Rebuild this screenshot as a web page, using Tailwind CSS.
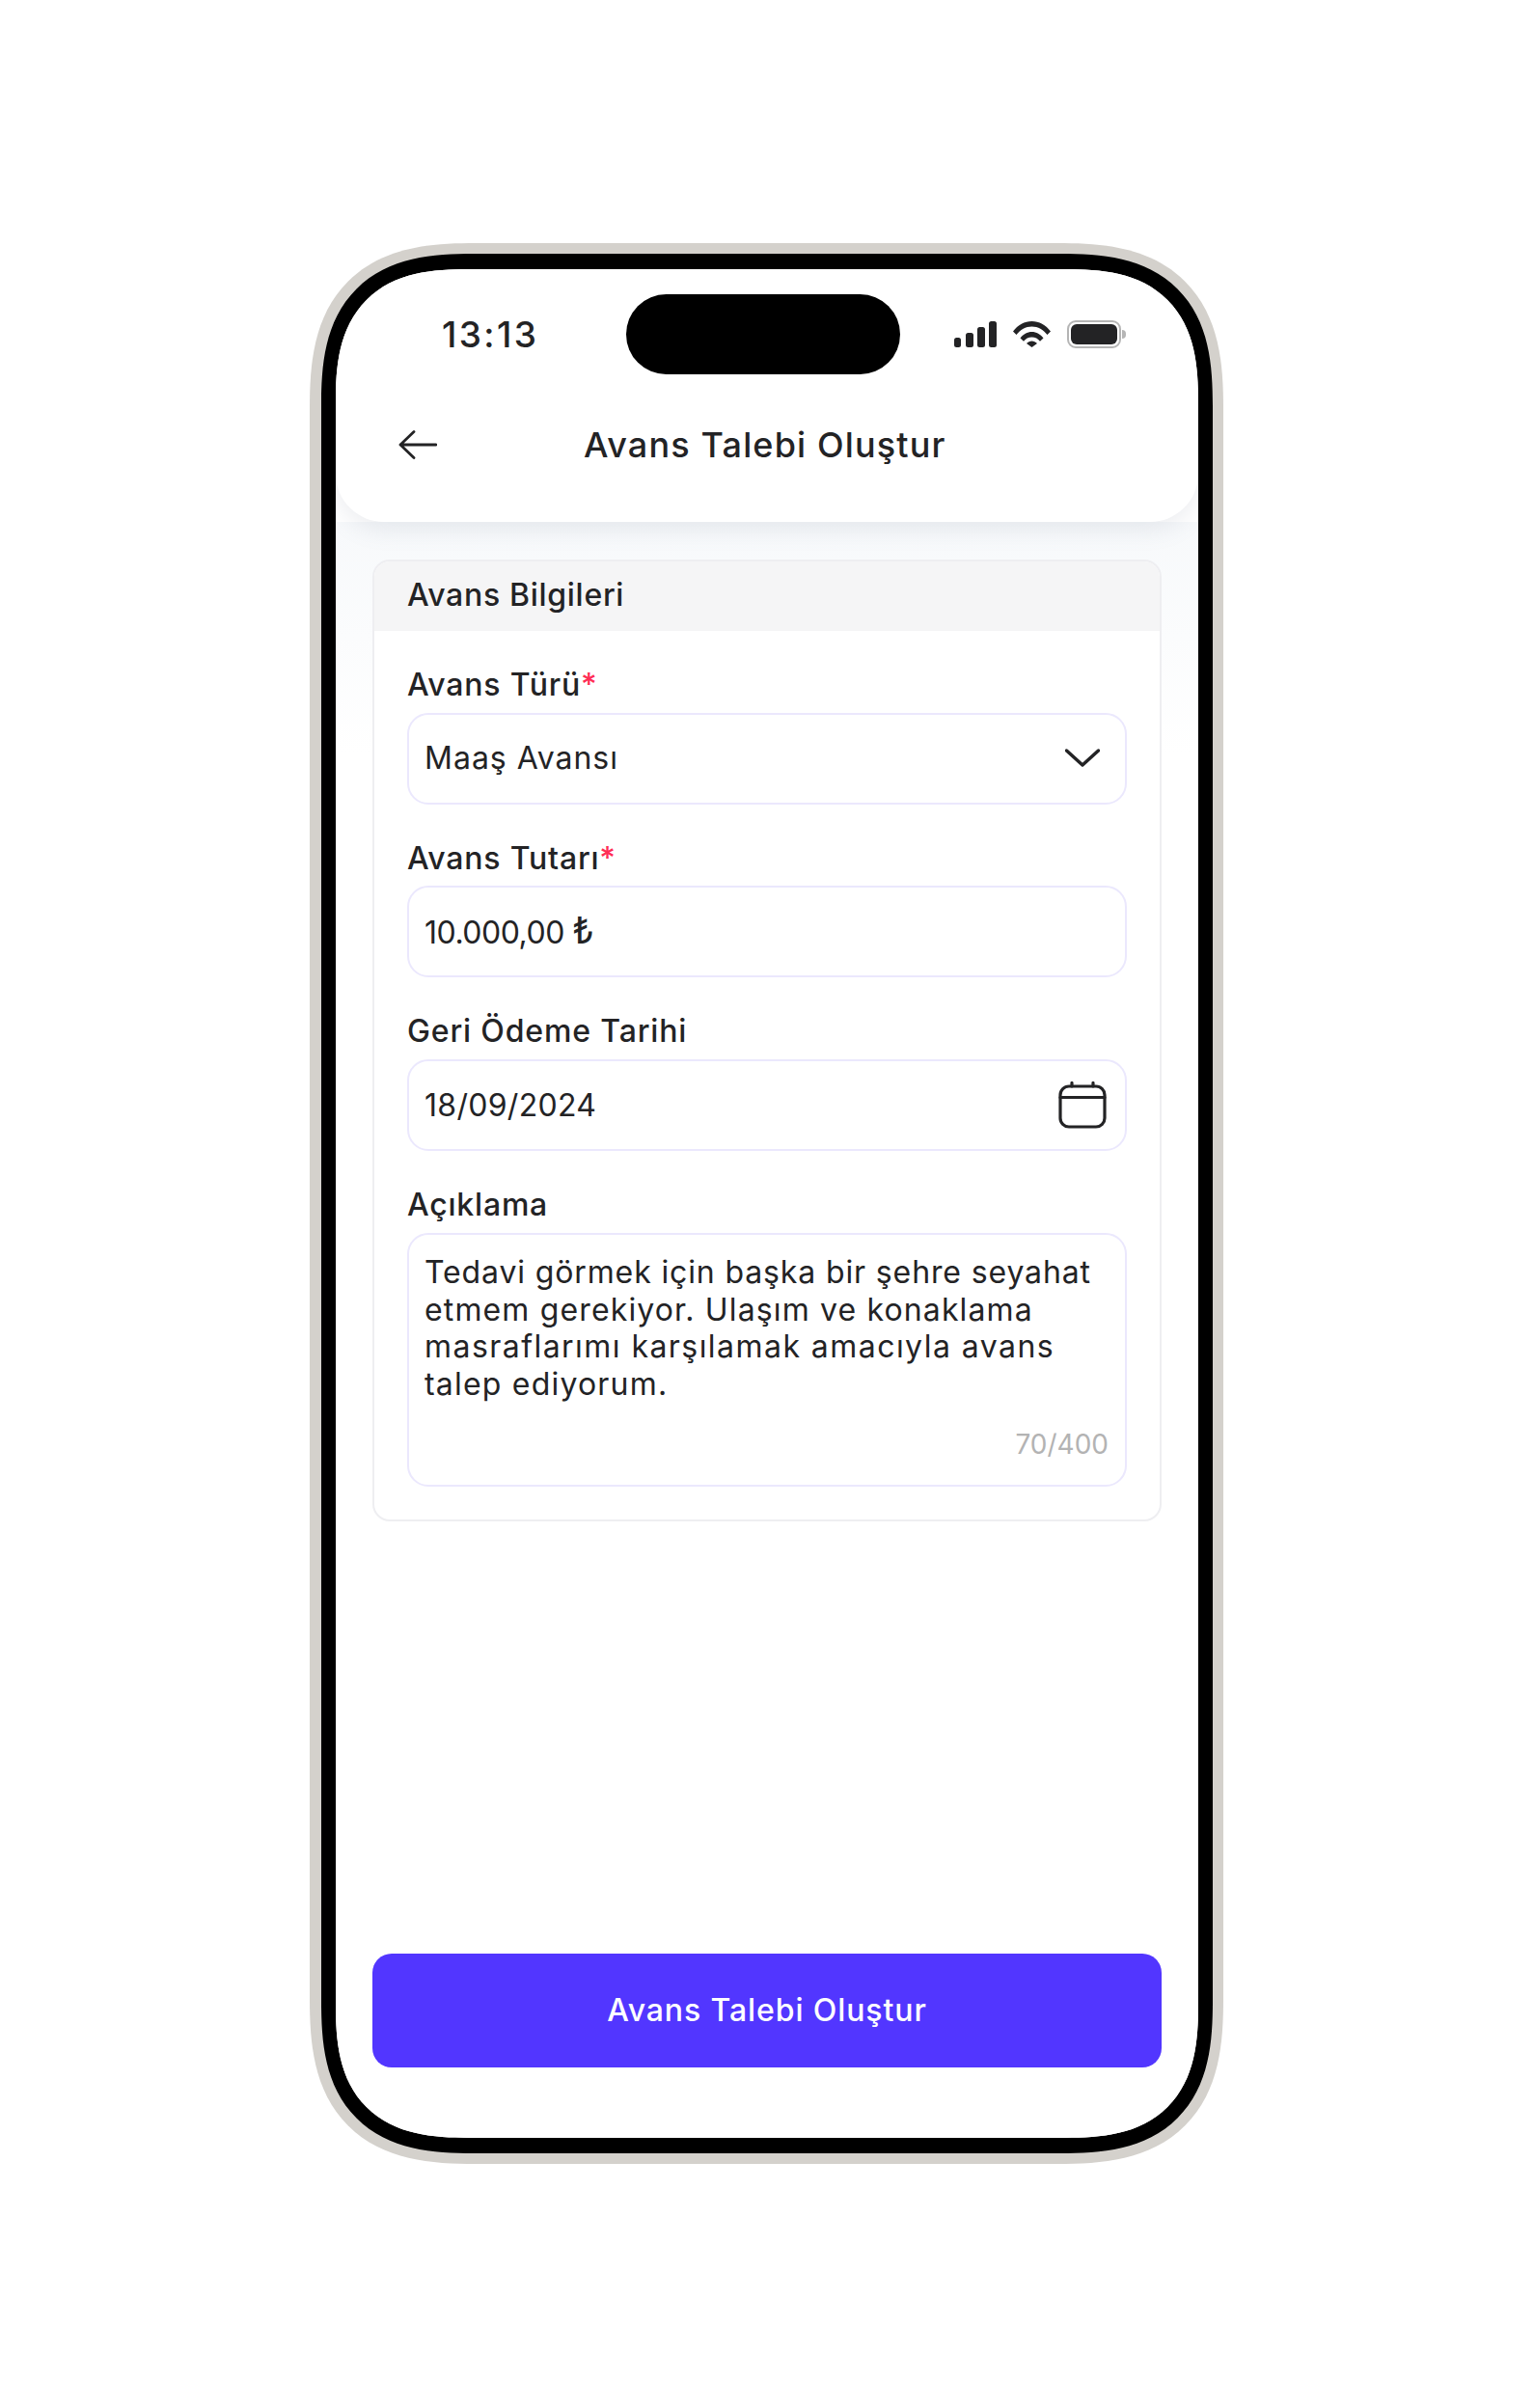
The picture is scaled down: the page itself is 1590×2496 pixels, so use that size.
<!DOCTYPE html>
<html lang="tr"><head><meta charset="utf-8"><title>Avans Talebi Oluştur</title>
<script src="https://cdn.jsdelivr.net/npm/@tailwindcss/browser@4"></script></head>
<body class="bg-white">
<div class="w-[1590px] h-[2496px] pt-[252px] pl-[321px] font-['Inter','Open_Sans',sans-serif] text-[#232325]">
  <div class="w-[947px] h-[1991px] bg-[#d4d1cc] rounded-[172px] [corner-shape:superellipse(1.4)] pl-[12px] pr-[11px] pt-[11px] pb-[11px]">
    <div class="w-[924px] h-[1969px] bg-black rounded-[158px] [corner-shape:superellipse(1.4)] px-[15px] py-[16px]">
      <div class="w-[894px] h-[1937px] bg-white rounded-[138px] [corner-shape:superellipse(1.4)] overflow-hidden flex flex-col">
        <header class="h-[262px] shrink-0 bg-white rounded-b-[50px] shadow-[0_8px_24px_rgba(120,130,150,0.14)] relative z-10">
          <div class="flex pt-[26px] h-[109px]">
            <div class="w-[301px] pl-[110px] h-[83px] flex items-center text-[37px] font-medium tracking-[2.400px]">13:13</div>
            <div class="w-[284px] h-[83px] bg-black rounded-full"></div>
            <div class="flex-1 h-[83px] flex items-center pl-[56px] gap-[17px]">
              <svg class="w-[44px] h-[27px]" viewBox="0 0 44 27" fill="#232325"><rect x="0" y="17" width="7" height="10" rx="2.5"/><rect x="12" y="12" width="8" height="15" rx="2.5"/><rect x="24" y="6" width="8" height="21" rx="2.5"/><rect x="36" y="0" width="8" height="27" rx="2.5"/></svg>
              <svg class="w-[39px] h-[27px]" viewBox="0 0 39 27" fill="#232325"><path d="M0 10.5C5 4 12 0 19.500 0S34 4 39 10.500L35.500 14C31.500 8.800 26 5.500 19.500 5.500S7.500 8.800 3.500 14Z"/><path d="M7.500 17.500C10.500 13.500 14.800 11 19.500 11S28.500 13.500 31.500 17.500L28 20.800C25.800 18 23 16.500 19.500 16.500S13.200 18 11 20.800Z"/><path d="M14 23C15.500 21.500 17.500 20.600 19.500 20.600S23.500 21.500 25 23L19.500 27Z"/></svg>
              <div class="flex items-center">
                <div class="w-[56px] h-[29px] rounded-[9px] border-2 border-[#b5b5b5] p-[2px]"><div class="w-full h-full bg-[#232325] rounded-[6px]"></div></div>
                <div class="w-[4px] h-[9px] bg-[#b5b5b5] rounded-r-full ml-[1px]"></div>
              </div>
            </div>
          </div>
          <div class="flex items-center h-[60px] pl-[65px] mt-[43px]">
            <svg class="w-[40px] h-[30px] shrink-0" viewBox="0 0 40 30" fill="none" stroke="#232325" stroke-width="2.800" stroke-linecap="round" stroke-linejoin="round"><path d="M39 15H2M16 1.500 2 15 16 28.500"/></svg>
            <h1 class="ml-[152px] w-[375px] text-center text-[36px] font-medium leading-none whitespace-nowrap tracking-[1.150px]">Avans Talebi Oluştur</h1>
          </div>
        </header>
        <main class="flex-1 flex flex-col px-[38px] bg-gradient-to-b from-[#f7f9fb] to-white to-[240px]">
          <section class="mt-[39px] h-[997px] bg-white rounded-[18px] border-2 border-[#eeeef1] overflow-hidden">
            <div class="h-[72px] bg-[#f5f5f6] flex items-center pl-[34px] pb-[3px] text-[32px] font-medium leading-none whitespace-nowrap tracking-[0.7px]">Avans Bilgileri</div>
            <div class="px-[34px] pt-[34px] flex flex-col">
              <label class="h-[51px] text-[32px] font-medium leading-[44px] whitespace-nowrap tracking-[0.800px]">Avans Türü<span class="text-[#ff2d55]">*</span></label>
              <div class="h-[95px] rounded-[22px] border-2 border-[#ebe8fd] flex items-center justify-between pl-[16px] pr-[26px] pb-[2px] text-[32px] leading-none tracking-[1px]">Maaş Avansı
                <svg class="w-[36px] h-[19px]" viewBox="0 0 36 19" fill="none" stroke="#232325" stroke-width="3.500" stroke-linecap="round" stroke-linejoin="round"><path d="M1.500 2 18 17 34.500 2"/></svg>
              </div>
              <label class="mt-[34px] h-[50px] text-[32px] font-medium leading-[44px] whitespace-nowrap tracking-[0.800px]">Avans Tutarı<span class="text-[#ff2d55]">*</span></label>
              <div class="h-[95px] rounded-[22px] border-2 border-[#ebe8fd] flex items-center pl-[16px] pb-[4px] text-[32px] leading-none tracking-[-0.5px]"><span>10.000,00 <span class="text-[38px] leading-none">₺</span></span></div>
              <label class="mt-[34px] h-[51px] text-[32px] font-medium leading-[44px] whitespace-nowrap tracking-[0.850px]">Geri Ödeme Tarihi</label>
              <div class="h-[95px] rounded-[22px] border-2 border-[#ebe8fd] flex items-center justify-between pl-[16px] pr-[19px] text-[32px] leading-none tracking-[0.3px]">18/09/2024
                <svg class="w-[50px] h-[49px]" viewBox="0 0 50 49" fill="none" stroke="#232325" stroke-width="3.200" stroke-linecap="round" stroke-linejoin="round"><rect x="2" y="5" width="46" height="42" rx="9"/><path d="M2 16.500H48M14 1.500V5M36 1.500V5"/></svg>
              </div>
              <label class="mt-[34px] h-[51px] text-[32px] font-medium leading-[44px] whitespace-nowrap tracking-[0.800px]">Açıklama</label>
              <div class="h-[263px] rounded-[22px] border-2 border-[#ebe8fd] pl-[16px] pr-[17px] pt-[20px] flex flex-col">
                <p class="text-[32px] leading-[38.500px] whitespace-nowrap h-[154px]"><span class="block tracking-[0.870px]">Tedavi görmek için başka bir şehre seyahat</span><span class="block tracking-[1.140px]">etmem gerekiyor. Ulaşım ve konaklama</span><span class="block tracking-[1.450px]">masraflarımı karşılamak amacıyla avans</span><span class="block tracking-[1.200px]">talep ediyorum.</span></p>
                <div class="mt-[24px] text-right text-[#b3b3b3] text-[28px] leading-[38px]">70/400</div>
              </div>
            </div>
          </section>
          <button class="mt-[448px] h-[118px] w-[818px] shrink-0 rounded-[20px] bg-[#5236ff] text-white text-[32px] font-medium tracking-[0.9px]">Avans Talebi Oluştur</button>
        </main>
      </div>
    </div>
  </div>
</div>
</body></html>
